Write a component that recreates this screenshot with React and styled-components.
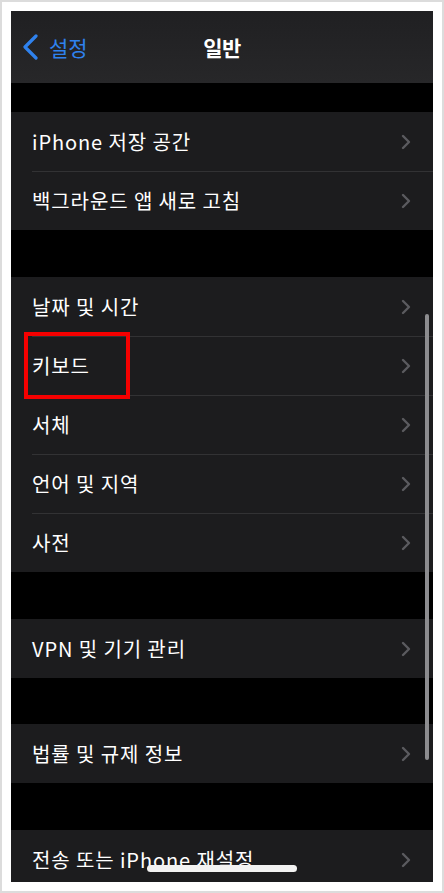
import React from 'react';
import styled, { createGlobalStyle } from 'styled-components';

const GlobalStyle = createGlobalStyle`
  html, body {
    margin: 0;
    padding: 0;
    background: #fff;
  }
  * {
    box-sizing: border-box;
  }
`;

const Frame = styled.div`
  width: 444px;
  height: 893px;
  border: 2px solid #dcdcdc;
  padding: 9px;
  background: #fff;
`;

const Screen = styled.div`
  position: relative;
  width: 422px;
  height: 871px;
  background: #000;
  overflow: hidden;
  font-family: 'Noto Sans CJK KR', 'Noto Sans', sans-serif;
  color: #fff;
`;

const NavBar = styled.div`
  position: relative;
  display: flex;
  align-items: center;
  justify-content: center;
  height: 72px;
  background: linear-gradient(180deg, #202022 0%, #272729 100%);
`;

const BackButton = styled.div`
  position: absolute;
  left: 11px;
  top: 0;
  bottom: 0;
  display: flex;
  align-items: center;
  gap: 10px;
  color: #2f82ee;
  font-size: 21px;
`;

const Title = styled.div`
  font-size: 21px;
  font-weight: 700;
  letter-spacing: -0.5px;
`;

const Gap = styled.div`
  height: ${({ size }) => size}px;
  background: #000;
`;

const Group = styled.div`
  background: #1c1c1e;
`;

const Row = styled.div`
  position: relative;
  display: flex;
  align-items: center;
  justify-content: space-between;
  height: 59px;
  padding: 0 22px 0 21px;
  font-size: 20px;
  letter-spacing: 0.9px;

  & + &::before {
    content: '';
    position: absolute;
    top: 0;
    left: 21px;
    right: 0;
    height: 1px;
    background: #323234;
  }
`;

const Label = styled.span`
  white-space: nowrap;
`;

const Scrollbar = styled.div`
  position: absolute;
  right: 4px;
  top: 303px;
  width: 4px;
  height: 446px;
  border-radius: 2px;
  background: #8c8c8f;
`;

const HomeIndicator = styled.div`
  position: absolute;
  left: 136px;
  bottom: 10px;
  width: 150px;
  height: 7px;
  border-radius: 4px;
  background: #f2f2f2;
`;

const Highlight = styled.div`
  position: absolute;
  left: 13px;
  top: 321px;
  width: 106px;
  height: 67px;
  border: 4px solid #f50000;
`;

const Chevron = () => (
  <svg width="10" height="16" viewBox="0 0 10 16">
    <polyline points="2,2 8,8 2,14" fill="none" stroke="#5b5b5f" strokeWidth="2.4" strokeLinecap="round" strokeLinejoin="round" />
  </svg>
);

const BackChevron = () => (
  <svg width="17" height="26" viewBox="0 0 17 26">
    <polyline points="14,2 3,13 14,24" fill="none" stroke="#2f82ee" strokeWidth="3.2" strokeLinecap="round" strokeLinejoin="round" />
  </svg>
);

const groups = [
  { gap: 29, items: ['iPhone 저장 공간', '백그라운드 앱 새로 고침'] },
  { gap: 47, items: ['날짜 및 시간', '키보드', '서체', '언어 및 지역', '사전'] },
  { gap: 47, items: ['VPN 및 기기 관리'] },
  { gap: 46, items: ['법률 및 규제 정보'] },
  { gap: 47, items: ['전송 또는 iPhone 재설정'] },
];

const App = () => (
  <>
    <GlobalStyle />
    <Frame>
      <Screen>
        <NavBar>
          <BackButton>
            <BackChevron />
            <span>설정</span>
          </BackButton>
          <Title>일반</Title>
        </NavBar>
        {groups.map((group, i) => (
          <React.Fragment key={i}>
            <Gap size={group.gap} />
            <Group>
              {group.items.map((item) => (
                <Row key={item}>
                  <Label>{item}</Label>
                  <Chevron />
                </Row>
              ))}
            </Group>
          </React.Fragment>
        ))}
        <Scrollbar />
        <Highlight />
        <HomeIndicator />
      </Screen>
    </Frame>
  </>
);

export default App;
